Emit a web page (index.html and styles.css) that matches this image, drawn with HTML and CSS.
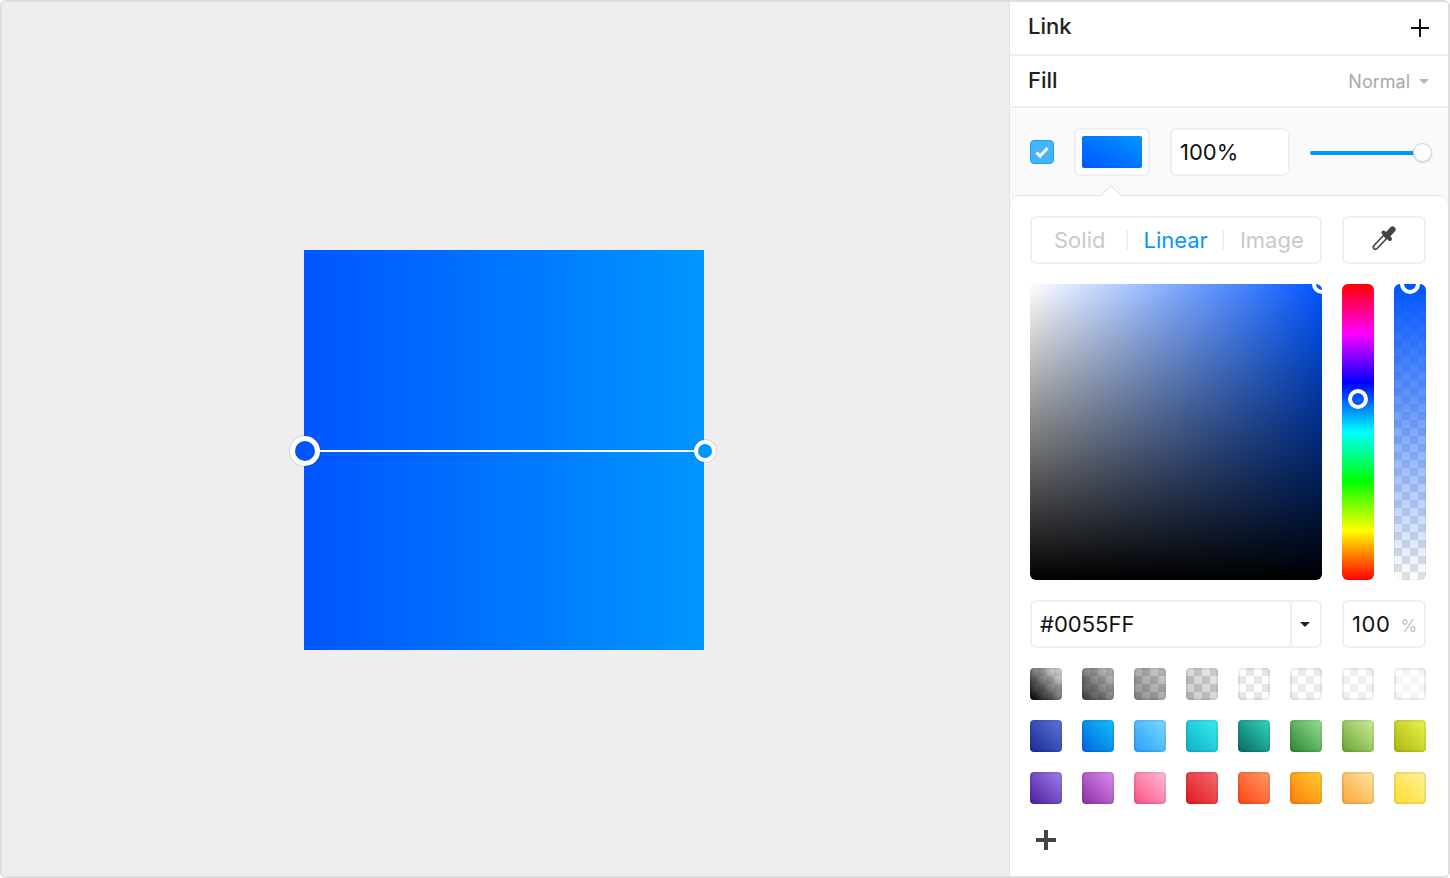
FILE: index.html
```html
<!DOCTYPE html>
<html lang="en">
<head>
<meta charset="utf-8">
<title>Fill</title>
<link rel="stylesheet" href="styles.css">
</head>
<body>
<div class="window">
  <main class="canvas">
    <div class="artboard">
      <div class="grad-line"></div>
      <div class="grad-stop stop-start"></div>
      <div class="grad-stop stop-end"></div>
    </div>
  </main>
  <aside class="panel">
    <header class="row row-link">
      <span class="row-title">Link</span>
      <svg class="plus-thin" viewBox="0 0 18 18"><path d="M9 0v18M0 9h18" stroke="#111" stroke-width="2" fill="none"/></svg>
    </header>
    <header class="row row-fill">
      <span class="row-title">Fill</span>
      <span class="blend">Normal<i class="caret caret-light"></i></span>
    </header>
    <section class="fill-controls">
      <span class="checkbox">
        <svg viewBox="0 0 22 22"><path d="M5.5 11.5l3.6 3.6L16.5 7" stroke="#fff" stroke-width="3" fill="none"/></svg>
      </span>
      <span class="field swatch-field"><span class="fill-preview"></span></span>
      <span class="field opacity-field">100%</span>
      <span class="slider"><span class="slider-thumb"></span></span>
    </section>
    <section class="popover">
      <span class="popover-arrow"></span>
      <div class="picker-top">
        <div class="field tabs">
          <span class="tab tab-solid">Solid</span>
          <span class="tab-sep"></span>
          <span class="tab tab-linear">Linear</span>
          <span class="tab-sep"></span>
          <span class="tab tab-image">Image</span>
        </div>
        <button class="field dropper">
          <svg viewBox="0 0 26 26" width="26" height="26">
            <path d="M4.5 22L15 11" stroke="#444" stroke-width="6" stroke-linecap="round" fill="none"/>
            <path d="M4.5 22L15 11" stroke="#fff" stroke-width="2.6" stroke-linecap="round" fill="none"/>
            <path d="M12.5 7.5L19 14" stroke="#444" stroke-width="4" stroke-linecap="round" fill="none"/>
            <path d="M16 10.5L21.5 4.5" stroke="#444" stroke-width="6.2" stroke-linecap="round" fill="none"/>
          </svg>
        </button>
      </div>
      <div class="picker-main">
        <div class="sv-box"><span class="ring ring-sv"></span></div>
        <div class="strip hue"><span class="ring ring-hue"></span></div>
        <div class="strip alpha"><span class="ring ring-alpha"></span></div>
      </div>
      <div class="picker-inputs">
        <div class="field hex">
          <span class="hex-value">#0055FF</span>
          <span class="hex-drop"><i class="caret caret-dark"></i></span>
        </div>
        <div class="field percent"><span class="percent-value">100</span><span class="percent-sign">%</span></div>
      </div>
      <div class="swatches">
        <span class="sw g1"></span><span class="sw g2"></span><span class="sw g3"></span><span class="sw g4"></span>
        <span class="sw g5"></span><span class="sw g6"></span><span class="sw g7"></span><span class="sw g8"></span>
        <span class="sw c1"></span><span class="sw c2"></span><span class="sw c3"></span><span class="sw c4"></span>
        <span class="sw c5"></span><span class="sw c6"></span><span class="sw c7"></span><span class="sw c8"></span>
        <span class="sw d1"></span><span class="sw d2"></span><span class="sw d3"></span><span class="sw d4"></span>
        <span class="sw d5"></span><span class="sw d6"></span><span class="sw d7"></span><span class="sw d8"></span>
      </div>
      <svg class="plus-bold" viewBox="0 0 20 20"><path d="M10 0v20M0 10h20" stroke="#444" stroke-width="4" fill="none"/></svg>
    </section>
  </aside>
</div>
</body>
</html>
```
FILE: styles.css
```css
* { box-sizing: border-box; }
html, body { margin: 0; padding: 0; }
body { width: 1450px; height: 878px; overflow: hidden; background: #fff; font-family: Inter, "Liberation Sans", sans-serif; }

.window { width: 1450px; height: 878px; display: flex; border: 2px solid #dedede; border-radius: 6px; overflow: hidden; background: #fff; }

.canvas { width: 1007px; height: 100%; background: #eeeeee; padding: 248px 0 0 302px; }
.artboard { position: relative; width: 400px; height: 400px; background: linear-gradient(to right, #0055ff, #0096ff); }
.grad-line { position: absolute; left: 0; right: 0; top: 200px; height: 2px; background: #fff; }
.grad-stop { position: absolute; border-radius: 50%; border-style: solid; border-color: #fff; box-shadow: 0 0 0 1px rgba(0,0,0,.1); }
.stop-start { left: -14px; top: 186px; width: 30px; height: 30px; border-width: 5px; background: #0055ff; }
.stop-end { left: 390px; top: 190px; width: 22px; height: 22px; border-width: 4px; background: #0096ff; }

.panel { width: 439px; height: 100%; border-left: 1px solid #e2e2e2; display: flex; flex-direction: column; background: #fafafa; }
.row { display: flex; align-items: center; justify-content: space-between; background: #fff; border-bottom: 2px solid #eeeeee; padding: 0 19px 0 18px; flex: none; }
.row-link { height: 54px; padding-bottom: 4px; }
.row-fill { height: 52px; padding-bottom: 2px; }
.row-title { font-size: 22px; font-weight: 500; color: #222; }
.plus-thin { width: 18px; height: 18px; margin-top: 3px; }
.blend { font-size: 18px; color: #a9a9a9; display: flex; align-items: center; gap: 9px; margin-top: 2px; }
.caret { display: block; width: 0; height: 0; border-left: 5px solid transparent; border-right: 5px solid transparent; border-top: 5px solid; }
.caret-light { color: #b5b5b5; }
.caret-dark { color: #222; }

.field { border: 2px solid #efefef; border-radius: 6px; background: #fff; }

.fill-controls { height: 87px; display: flex; align-items: center; padding: 0 0 0 20px; flex: none; }
.checkbox { width: 24px; height: 24px; border-radius: 4px; background: #46b5ff; border: 1px solid #1a9fff; display: block; }
.checkbox svg { display: block; width: 22px; height: 22px; }
.swatch-field { width: 76px; height: 48px; margin-left: 20px; padding: 6px; }
.fill-preview { display: block; width: 60px; height: 32px; border-radius: 2px; background: linear-gradient(to top right, #0055ff, #0096ff); }
.opacity-field { width: 120px; height: 48px; margin-left: 20px; padding-left: 8px; font-size: 22px; line-height: 44px; color: #111; }
.slider { position: relative; width: 110px; height: 4px; margin-left: 20px; margin-top: 3px; background: #0096ff; border-radius: 2px; }
.slider-thumb { position: absolute; left: 103px; top: -8px; width: 19px; height: 19px; border-radius: 50%; background: #fff; border: 1px solid #d4d4d4; box-shadow: 0 1px 2px rgba(0,0,0,.15); }

.popover { position: relative; flex: 1; background: #fff; border-top: 1px solid #e2e2e2; border-radius: 10px 10px 0 0; padding: 20px 22px 0 20px; }
.popover-arrow { position: absolute; left: 93px; top: -8px; width: 16px; height: 16px; background: #fff; border-top: 1px solid #e2e2e2; border-left: 1px solid #e2e2e2; transform: rotate(45deg); }

.picker-top { display: flex; justify-content: space-between; }
.tabs { width: 292px; height: 48px; display: flex; align-items: center; font-size: 22px; }
.tab { color: #c9c9c9; }
.tab-solid { margin: 0 6px 0 22px; }
.tab-linear { color: #0a96ff; margin: 0 -1px 0 15px; }
.tab-image { margin-left: 16px; }
.tab-sep { width: 2px; height: 20px; background: #efefef; margin-left: 15px; }
.dropper { width: 84px; height: 48px; padding: 0; display: flex; align-items: center; justify-content: center; }
.dropper svg { margin-top: -4px; }

.picker-main { display: flex; margin-top: 20px; height: 296px; }
.sv-box { position: relative; overflow: hidden; width: 292px; border-radius: 6px; background: linear-gradient(to top, #000, transparent), linear-gradient(to right, #fff, #0055ff); }
.strip { position: relative; overflow: hidden; width: 32px; margin-left: 20px; border-radius: 6px; }
.hue { background: linear-gradient(to bottom, #f00, #f0f, #00f, #0ff, #0f0, #ff0, #f00); }
.alpha { background: linear-gradient(to bottom, #0055ff, rgba(0,85,255,0)), repeating-conic-gradient(#e2e2e2 0 25%, #fff 0 50%) 0 0 / 16px 16px; box-shadow: inset 0 0 0 1px rgba(0,0,0,.06); }
.ring { position: absolute; width: 20px; height: 20px; border: 4px solid #fff; border-radius: 50%; }
.ring-sv { right: -10px; top: -10px; }
.ring-hue { left: 6px; top: 105px; background: #0055ff; }
.ring-alpha { left: 6px; top: -10px; background: #0055ff; }

.picker-inputs { display: flex; justify-content: space-between; margin-top: 20px; }
.hex { width: 292px; height: 48px; display: flex; align-items: center; justify-content: space-between; }
.hex-value { font-size: 22px; margin-left: 8px; color: #111; }
.hex-drop { width: 30px; height: 100%; border-left: 2px solid #efefef; padding-right: 2px; display: flex; align-items: center; justify-content: center; }
.percent { width: 84px; height: 48px; display: flex; align-items: center; padding-left: 8px; font-size: 22px; color: #111; }
.percent-value { letter-spacing: .6px; }
.percent-sign { font-size: 17px; color: #bdbdbd; margin-left: 10px; margin-top: 3px; }

.swatches { display: grid; grid-template-columns: repeat(8, 32px); gap: 20px; margin-top: 20px; }
.sw { display: block; width: 32px; height: 32px; border-radius: 4px; box-shadow: inset 0 0 0 2px rgba(0,0,0,.07); }
.g1 { background: linear-gradient(to top right, rgba(0,0,0,1), rgba(0,0,0,.05)), repeating-conic-gradient(#e8e8e8 0 25%, #fff 0 50%) 0 0 / 16px 16px; }
.g2 { background: linear-gradient(to top right, rgba(0,0,0,.75), rgba(0,0,0,.2)), repeating-conic-gradient(#e4e4e4 0 25%, #fff 0 50%) 0 0 / 16px 16px; }
.g3 { background: linear-gradient(to top right, rgba(0,0,0,.45), rgba(0,0,0,.18)), repeating-conic-gradient(#e0e0e0 0 25%, #fff 0 50%) 0 0 / 16px 16px; }
.g4 { background: linear-gradient(to top right, rgba(0,0,0,.22), rgba(0,0,0,.08)), repeating-conic-gradient(#e0e0e0 0 25%, #fff 0 50%) 0 0 / 16px 16px; }
.g5 { background: repeating-conic-gradient(#e6e6e6 0 25%, #fff 0 50%) 0 0 / 16px 16px; }
.g6 { background: repeating-conic-gradient(#ececec 0 25%, #fff 0 50%) 0 0 / 16px 16px; }
.g7 { background: repeating-conic-gradient(#f0f0f0 0 25%, #fff 0 50%) 0 0 / 16px 16px; }
.g8 { background: repeating-conic-gradient(#f5f5f5 0 25%, #fff 0 50%) 0 0 / 16px 16px; }
.c1 { background: linear-gradient(to top right, #1a2a96, #5c75d6); }
.c2 { background: linear-gradient(to top right, #0063de, #13c1fb); }
.c3 { background: linear-gradient(to top right, #269efb, #7ddcff); }
.c4 { background: linear-gradient(to top right, #0faec6, #38eef2); }
.c5 { background: linear-gradient(to top right, #05695f, #35d6c0); }
.c6 { background: linear-gradient(to top right, #2a8430, #97e296); }
.c7 { background: linear-gradient(to top right, #6ba232, #cdee9c); }
.c8 { background: linear-gradient(to top right, #aab60c, #e8f650); }
.d1 { background: linear-gradient(to top right, #4a1fa0, #a07eea); }
.d2 { background: linear-gradient(to top right, #8b2ea4, #dc8fee); }
.d3 { background: linear-gradient(to top right, #fb4f82, #ffc0d8); }
.d4 { background: linear-gradient(to top right, #dc1a1c, #f86a70); }
.d5 { background: linear-gradient(to top right, #ff4312, #ff9c66); }
.d6 { background: linear-gradient(to top right, #ff7a0c, #ffd030); }
.d7 { background: linear-gradient(to top right, #fba73a, #ffe4a0); }
.d8 { background: linear-gradient(to top right, #ffdc30, #fff29a); }

.plus-bold { display: block; width: 20px; height: 20px; margin: 26px 0 0 6px; }
```
